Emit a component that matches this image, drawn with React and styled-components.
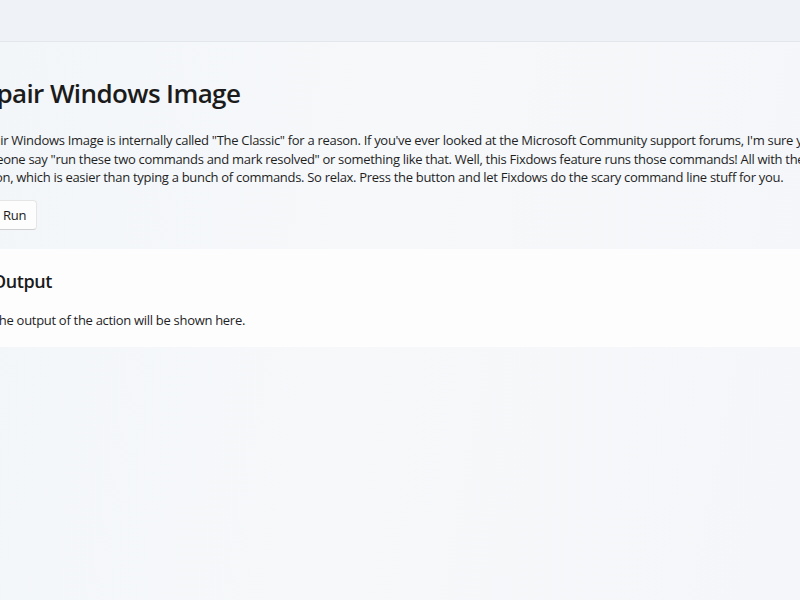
import React from "react";
import styled, { createGlobalStyle } from "styled-components";

const Global = createGlobalStyle`
  html, body { margin: 0; padding: 0; }
  body {
    width: 800px;
    height: 600px;
    overflow: hidden;
    font-family: "Segoe UI", "Open Sans", "Noto Sans", sans-serif;
    color: #1b1b1b;
    background: #f4f6f9;
  }
`;

const Shell = styled.div`
  width: 800px;
  height: 600px;
  display: flex;
  flex-direction: column;
  overflow: hidden;
  background: linear-gradient(100deg, #f3f6f9 0%, #f6f8fa 45%, #f4f6f9 100%);
`;

const TitleBar = styled.div`
  height: 41px;
  flex: none;
  background: #eff2f6;
  border-bottom: 1px solid #e3e6ea;
`;

const Content = styled.main`
  margin-left: -29px;
  width: 1000px;
  padding-top: 33px;
  display: flex;
  flex-direction: column;
`;

const Title = styled.h1`
  margin: 0 0 0 -5px;
  font-size: 26px;
  line-height: 36px;
  font-weight: 600;
  letter-spacing: -0.6px;
`;

const Paragraph = styled.p`
  margin: 20px 0 0;
  font-size: 13px;
  line-height: 18.5px;
  letter-spacing: -0.3px;
  white-space: nowrap;
  color: #1f1f1f;
`;

const RunButton = styled.button`
  margin-top: 13px;
  align-self: flex-start;
  height: 30px;
  display: flex;
  align-items: center;
  gap: 6px;
  padding: 0 10px 0 11px;
  font-family: inherit;
  font-size: 13px;
  letter-spacing: -0.3px;
  color: #1b1b1b;
  background: #fdfdfd;
  border: 1px solid #e5e5e5;
  border-bottom-color: #d0d0d0;
  border-radius: 4px;
`;

const Card = styled.section`
  margin-top: 19px;
  width: 1000px;
  padding: 18px 21px 17px;
  background: #fdfdfe;
  border-radius: 6px;
`;

const CardTitle = styled.h2`
  margin: 0;
  font-size: 18px;
  line-height: 28px;
  font-weight: 600;
  letter-spacing: -0.4px;
`;

const CardText = styled.p`
  margin: 15px 0 0;
  font-size: 13px;
  line-height: 20px;
  letter-spacing: -0.3px;
  color: #1f1f1f;
`;

const PlayIcon = () => (
  <svg width="14" height="14" viewBox="0 0 16 16" fill="none" stroke="#1b1b1b" strokeWidth="1.2">
    <path d="M4 2.5v11l9-5.5z" strokeLinejoin="round" />
  </svg>
);

export default function App() {
  return (
    <>
      <Global />
      <Shell>
        <TitleBar />
        <Content>
          <Title>Repair Windows Image</Title>
          <Paragraph>
            Repair Windows Image is internally called "The Classic" for a reason. If you've ever looked at the Microsoft Community support forums, I'm sure you've seen
            <br />
            someone say "run these two commands and mark resolved" or something like that. Well, this Fixdows feature runs those commands! All with the click of a
            <br />
            button, which is easier than typing a bunch of commands. So relax. Press the button and let Fixdows do the scary command line stuff for you.
          </Paragraph>
          <RunButton>
            <PlayIcon />
            Run
          </RunButton>
          <Card>
            <CardTitle>Output</CardTitle>
            <CardText>The output of the action will be shown here.</CardText>
          </Card>
        </Content>
      </Shell>
    </>
  );
}
